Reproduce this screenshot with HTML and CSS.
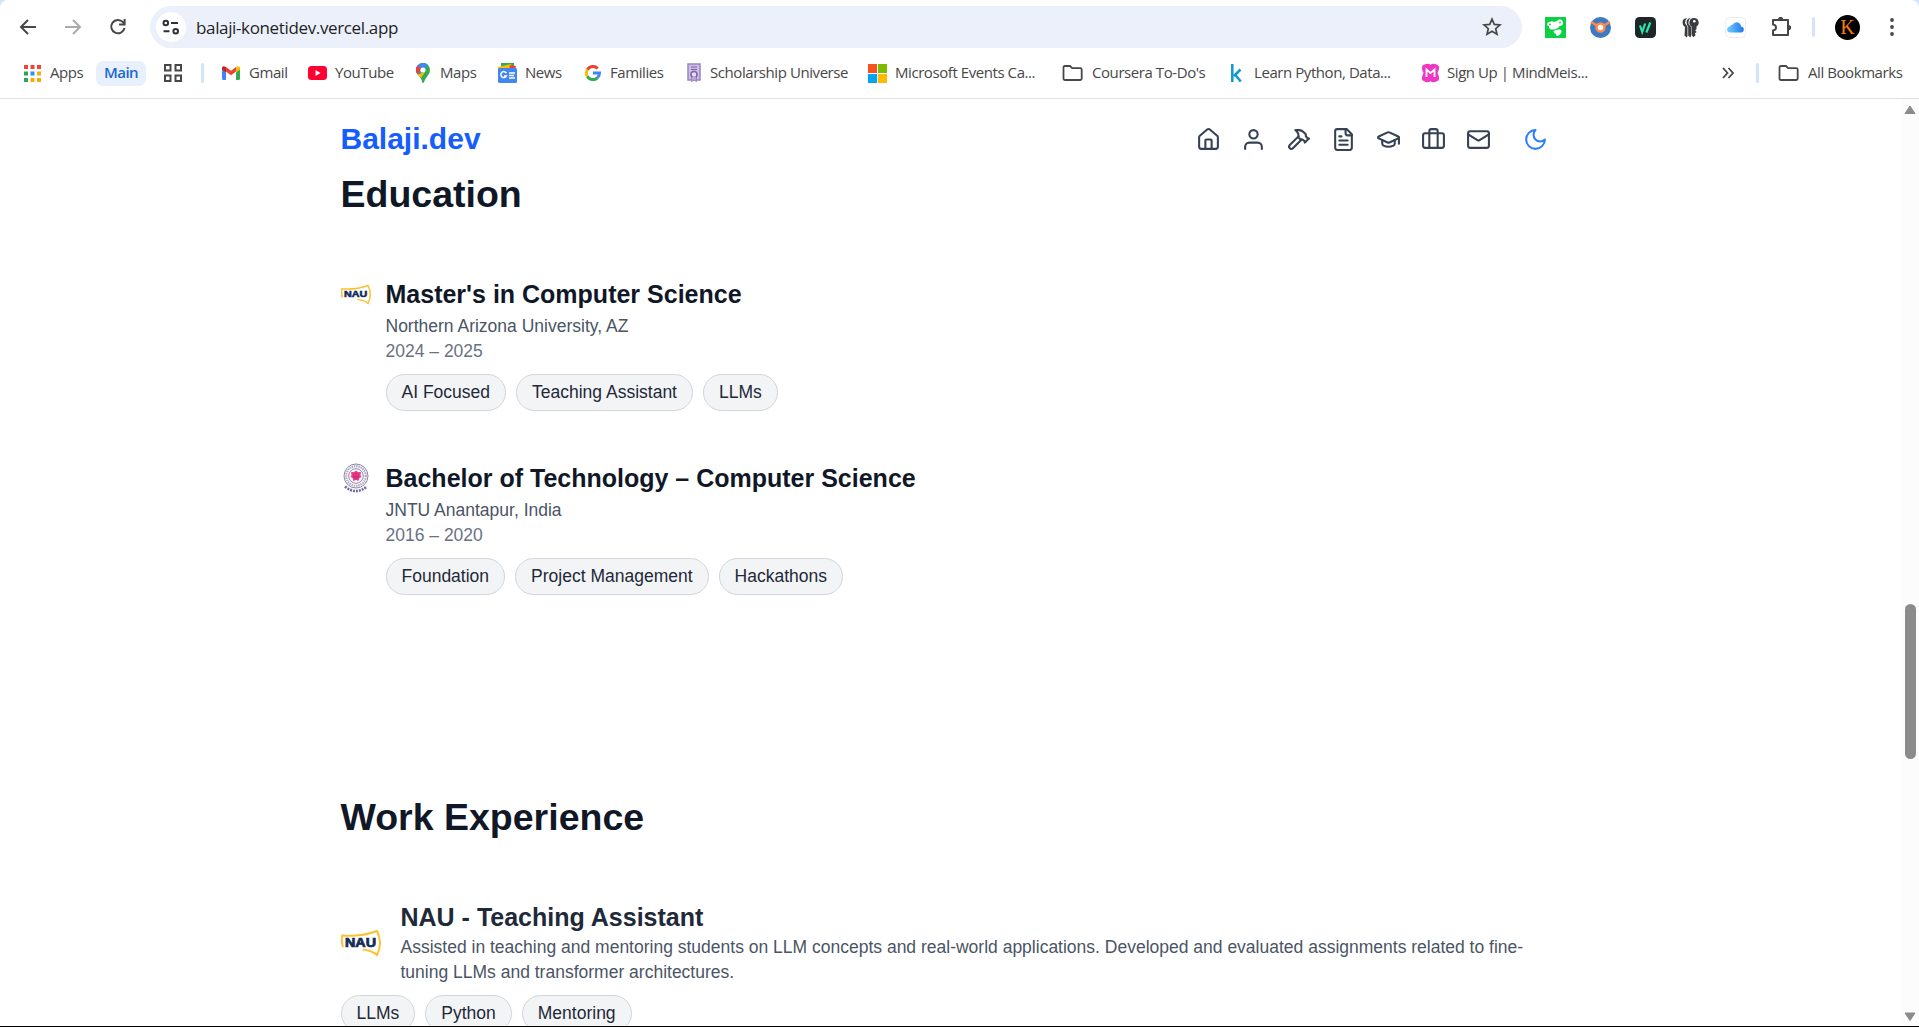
FILE: index.html
```html
<!DOCTYPE html>
<html lang="en">
<head>
<meta charset="utf-8">
<title>Balaji.dev</title>
<link rel="stylesheet" href="styles.css">
</head>
<body>
<div class="window">
  <header class="browser">
    <div class="toolbar">
      <svg class="back" width="18" height="18" viewBox="0 0 18 18"><path d="M17 9H2.500M9 2L2 9l7 7" fill="none" stroke="#474747" stroke-width="2"/></svg>
      <svg class="forward" width="18" height="18" viewBox="0 0 18 18"><path d="M1 9h14.500M9 2l7 7-7 7" fill="none" stroke="#ababab" stroke-width="2"/></svg>
      <svg class="reload" width="18" height="18" viewBox="0 0 18 18"><path d="M15.500 10A6.700 6.700 0 1 1 14 4.200L15.500 6" fill="none" stroke="#474747" stroke-width="2"/><path d="M16.600 1v6.500h-6.500v-2h4.500V1z" fill="#474747"/></svg>
      <div class="omnibox">
        <span class="site"><svg width="18" height="16" viewBox="0 0 18 16"><g fill="none" stroke="#303134" stroke-width="2"><circle cx="3.800" cy="4" r="2.300"/><path d="M9 4h7M1.500 12.300h6"/><circle cx="13.700" cy="12.300" r="2.300"/></g></svg></span>
        <span class="url">balaji-konetidev.vercel.app</span>
        <svg class="star" width="20" height="20" viewBox="0 0 20 20"><path d="M10 2.200l2.300 5.200 5.700.5-4.300 3.800 1.300 5.600-5-3-5 3 1.300-5.600L2 7.900l5.700-.5z" fill="none" stroke="#474747" stroke-width="1.700"/></svg>
      </div>
      <div class="extensions">
        <svg width="21" height="21" viewBox="0 0 21 21"><path d="M0 0h21v21H0z" fill="#0bd044"/><path d="M2 7.500Q2 4.500 5 5q1.500-1.500 4 0 2-1 3-.8Q13 2 15.500 2.500 18.500 3.500 18 7q-1 2-3.500 2-1 2.500-4 3-3 1-5.500 0-1.500-1.500-1-3Q2 9 2 7.500z" fill="#fff"/><path d="M8.500 14q3-2 6.500-1.500 2.500 1 1 3.500-1 2.500-3.500 3-1.500-.2-1.500-2-2.500-.5-2.500-3z" fill="#fff"/><circle cx="5" cy="7.500" r=".9" fill="#0bd044"/><circle cx="15" cy="5.500" r=".9" fill="#0bd044"/></svg>
        <svg width="21" height="21" viewBox="0 0 21 21"><circle cx="10.500" cy="10.500" r="10.500" fill="#3e7ac0"/><path d="M1 5l7 4M20 5l-7 4" stroke="#ff8a4b" stroke-width="2.500"/><circle cx="10.500" cy="10.500" r="4" fill="#fff" stroke="#ff8a4b" stroke-width="2.500"/></svg>
        <svg width="21" height="21" viewBox="0 0 21 21"><rect width="21" height="21" rx="4.500" fill="#1d2729"/><path d="M5 8.500L7.200 15l3-8.500M11.300 15.500l4-10" fill="none" stroke="#2ee6a8" stroke-width="2.200"/></svg>
        <svg width="21" height="21" viewBox="0 0 21 21"><g fill="#3b3c3f"><path d="M7 1Q1 1.500 3 8l2 2-.5 8.500 2.300 2L7.500 19V10L5 6Q5 3 7 1z"/><path d="M10.500 1Q5 2 7 8l1.200 2v8.500l2 2L11 19V10L8.500 7Q8 3 10.500 1z"/><path d="M14 1a4.600 4.600 0 0 0-2.500 8.500V18l2 2.200 2.200-2.200-1-1.500 2-1.500-1.500-1.500L16.500 12V9.500A4.600 4.600 0 0 0 14 1z"/></g><circle cx="14.300" cy="4.300" r="1.300" fill="#fff"/></svg>
        <svg width="21" height="21" viewBox="0 0 21 21"><defs><linearGradient id="cloud"><stop stop-color="#74ccff"/><stop offset="1" stop-color="#1d77ee"/></linearGradient></defs><rect x=".5" y=".5" width="20" height="20" rx="4" fill="#fff" stroke="#ececec"/><path d="M5.500 15.500q-3.500 0-3.500-3 0-2.500 3-3 .5-2 2.500-1.800Q9 5 12 5.200q3.500.3 4 4.300 3 .5 2.800 3.200-.3 2.800-3.300 2.800z" fill="url(#cloud)"/></svg>
        <svg width="21" height="21" viewBox="0 0 21 21"><path d="M2 3h15v15H2v-4.500q3-.3 3-3t-3-3z" fill="none" stroke="#474747" stroke-width="2" stroke-linejoin="round"/><path d="M7 2.500a2.600 2.600 0 0 1 5.200 0zM17.500 8a2.600 2.600 0 0 1 0 5.200z" fill="#474747"/></svg>
      </div>
      <i class="divider"></i>
      <span class="avatar">K</span>
      <svg class="menu" width="4" height="18" viewBox="0 0 4 18"><g fill="#474747"><circle cx="2" cy="2" r="1.900"/><circle cx="2" cy="9" r="1.900"/><circle cx="2" cy="16" r="1.900"/></g></svg>
    </div>
    <nav class="bookmarks">
      <a class="bm apps"><svg width="17" height="17" viewBox="0 0 17 17"><path d="M0 0h4v4H0zM6.500 0h4v4h-4zM13 0h4v4h-4z" fill="#f44336"/><path d="M0 6.500h4v4H0zM0 13h4v4H0z" fill="#34a060"/><path d="M6.500 6.500h4v4h-4z" fill="#2196f3"/><path d="M13 6.500h4v4h-4zM6.500 13h4v4h-4zM13 13h4v4h-4z" fill="#fbab07"/></svg><span>Apps</span></a>
      <a class="group">Main</a>
      <svg class="tabs" width="18" height="18" viewBox="0 0 18 18"><path d="M1 1h5.500v5.500H1zM11.500 1H17v5.500h-5.500zM1 11.500h5.500V17H1zM11.500 11.500H17V17h-5.500z" fill="none" stroke="#474747" stroke-width="2"/></svg>
      <i class="divider"></i>
      <a class="bm gmail"><svg width="18" height="14" viewBox="0 0 18 14"><path d="M0 2v10.500Q0 14 1.500 14H4V5z" fill="#4285f4"/><path d="M18 2v10.500q0 1.500-1.500 1.500H14V5z" fill="#34a853"/><path d="M4 5.500V1l5 3.800L14 1v4.500L9 9.300z" fill="#ea4335"/><path d="M0 2.300Q0-1 4 1v5.500L0 3.600z" fill="#c5221f"/><path d="M18 2.300Q18-1 14 1v5.500l4-2.900z" fill="#fbbc04"/></svg><span>Gmail</span></a>
      <a class="bm youtube"><svg width="19" height="14" viewBox="0 0 19 14"><rect width="19" height="14" rx="3.500" fill="#ff0033"/><path d="M7.500 4l5 3-5 3z" fill="#fff"/></svg><span>YouTube</span></a>
      <a class="bm maps"><svg width="14" height="20" viewBox="0 0 14 20"><path d="M7 0a7 7 0 0 1 7 7q0 3-2.500 6T7.500 20h-1Q6 16 3 13T0 7a7 7 0 0 1 7-7z" fill="#34a853"/><path d="M0 7q0 2.500 1.700 4.500L12 2A7 7 0 0 0 0 7z" fill="#4285f4"/><path d="M1.500 2.500L5 5.500 1.700 11.500Q-2 7 1.500 2.500z" fill="#ea4335"/><path d="M1.700 11.500L9 9l-4 6z" fill="#fbbc04"/><circle cx="7" cy="7" r="2.600" fill="#fff"/></svg><span>Maps</span></a>
      <a class="bm news"><svg width="19" height="20" viewBox="0 0 19 20"><path d="M3 0h13v6H3z" fill="#34a853"/><path d="M0 4l13-3 2 6H0z" fill="#fbbc04"/><path d="M12 2l6 1-1 4h-6z" fill="#ea4335"/><rect y="5" width="19" height="15" rx="1.500" fill="#4285f4"/><path d="M8.500 10.200A3 3 0 1 0 8.500 13H6M11 10h6M11 12.500h5M11 15h6" fill="none" stroke="#fff" stroke-width="1.500"/></svg><span>News</span></a>
      <a class="bm families"><svg width="16" height="16" viewBox="0 0 16 16"><g fill="none" stroke-width="3"><path d="M2.300 4.700A6.500 6.500 0 0 1 12.700 3.500" stroke="#ea4335"/><path d="M2.300 11.300a6.500 6.500 0 0 1 0-6.600" stroke="#fbbc05"/><path d="M12.400 12.800a6.500 6.500 0 0 1-10.100-1.500" stroke="#34a853"/><path d="M8 8h6.500q0 3-2.100 4.800" stroke="#4285f4"/></g></svg><span>Families</span></a>
      <a class="bm scholar"><svg width="14" height="20" viewBox="0 0 14 20"><rect x="1" y="1" width="12" height="16" fill="#cdbfe3" stroke="#9a85c2" stroke-width="1.500"/><path d="M4 4h6M4 6.500h6" stroke="#7a62ab" stroke-width="1.200"/><circle cx="7" cy="11.500" r="3" fill="#e7dff3" stroke="#7a62ab" stroke-width="1.500"/><path d="M4.500 14v4.500L7 17l2.500 1.500V14" fill="#b7a4d8" stroke="#9a85c2"/></svg><span>Scholarship Universe</span></a>
      <a class="bm microsoft"><svg width="19" height="19" viewBox="0 0 19 19"><path d="M0 0h9v9H0z" fill="#f8501f"/><path d="M10 0h9v9h-9z" fill="#7fba00"/><path d="M0 10h9v9H0z" fill="#03a4ef"/><path d="M10 10h9v9h-9z" fill="#ffb902"/></svg><span>Microsoft Events Ca...</span></a>
      <a class="bm coursera"><svg width="21" height="16" viewBox="0 0 21 16"><path d="M1.500 2.500q0-1.500 1.500-1.500h5l2.200 2.200h8q1.500 0 1.500 1.500v8.800q0 1.500-1.500 1.500H3q-1.500 0-1.500-1.500z" fill="none" stroke="#474747" stroke-width="1.800"/></svg><span>Coursera To-Do's</span></a>
      <a class="bm kaggle"><svg width="11" height="18" viewBox="0 0 11 18"><path d="M1.300 0v18M9.500 5.500L3 12M4 10.500l5.800 7" fill="none" stroke="#0d99cf" stroke-width="2.500"/></svg><span>Learn Python, Data...</span></a>
      <a class="bm mind"><svg width="19" height="20" viewBox="0 0 19 20"><path d="M5 1q3-1 4.500 1Q11 0 14 1q5 1 4 5-.5 2-1.500 4 1 2 1.500 4 1 4-4 5-3 1-4.500-1Q8 20 5 19q-5-1-4-5 .5-2 1.500-4-1-2-1.500-4-1-4 4-5z" fill="#f037c4"/><path d="M5.500 14V6.500l4 3.500 4-3.500V14" fill="none" stroke="#fff" stroke-width="1.800"/></svg><span>Sign Up | MindMeis...</span></a>
      <svg class="more" width="12" height="12" viewBox="0 0 12 12"><path d="M1 1l4.500 5L1 11M6.500 1L11 6l-4.500 5" fill="none" stroke="#474747" stroke-width="1.800"/></svg>
      <i class="divider"></i>
      <a class="bm all"><svg width="21" height="16" viewBox="0 0 21 16"><path d="M1.500 2.500q0-1.500 1.500-1.500h5l2.200 2.200h8q1.500 0 1.500 1.500v8.800q0 1.500-1.500 1.500H3q-1.500 0-1.500-1.500z" fill="none" stroke="#474747" stroke-width="1.800"/></svg><span>All Bookmarks</span></a>
    </nav>
  </header>
  <div class="viewport">
    <main class="page">
      <div class="site-nav">
        <a class="logo">Balaji.dev</a>
        <nav class="nav-icons">
          <svg viewBox="0 0 24 24"><path d="M15 21v-8a1 1 0 0 0-1-1h-4a1 1 0 0 0-1 1v8"/><path d="M3 10a2 2 0 0 1 .709-1.528l7-5.999a2 2 0 0 1 2.582 0l7 5.999A2 2 0 0 1 21 10v9a2 2 0 0 1-2 2H5a2 2 0 0 1-2-2z"/></svg>
          <svg viewBox="0 0 24 24"><path d="M20 21v-2a4 4 0 0 0-4-4H8a4 4 0 0 0-4 4v2"/><circle cx="12" cy="7" r="4"/></svg>
          <svg viewBox="0 0 24 24"><path d="m15 12-8.373 8.373a1 1 0 1 1-3-3L12 9"/><path d="m18 15 4-4"/><path d="m21.500 11.500-1.914-1.914A2 2 0 0 1 19 8.172V7l-2.260-2.260a6 6 0 0 0-4.202-1.756L9 2.960l.92.820A6.180 6.180 0 0 1 12 8.400V10l2 2h1.172a2 2 0 0 1 1.414.586L18.500 14.500"/></svg>
          <svg viewBox="0 0 24 24"><path d="M15 2H6a2 2 0 0 0-2 2v16a2 2 0 0 0 2 2h12a2 2 0 0 0 2-2V7Z"/><path d="M14 2v4a2 2 0 0 0 2 2h4M10 9H8M16 13H8M16 17H8"/></svg>
          <svg viewBox="0 0 24 24"><path d="M21.420 10.922a1 1 0 0 0-.019-1.838L12.830 5.180a2 2 0 0 0-1.660 0L2.600 9.080a1 1 0 0 0 0 1.832l8.570 3.908a2 2 0 0 0 1.660 0z"/><path d="M22 10v6"/><path d="M6 12.500V16a6 3 0 0 0 12 0v-3.500"/></svg>
          <svg viewBox="0 0 24 24"><path d="M16 20V4a2 2 0 0 0-2-2h-4a2 2 0 0 0-2 2v16"/><rect width="20" height="14" x="2" y="6" rx="2"/></svg>
          <svg viewBox="0 0 24 24"><rect width="20" height="16" x="2" y="4" rx="2"/><path d="m22 7-8.970 5.700a1.940 1.940 0 0 1-2.060 0L2 7"/></svg>
          <svg class="moon" viewBox="0 0 24 24"><path d="M12 3a6 6 0 0 0 9 9 9 9 0 1 1-9-9Z"/></svg>
        </nav>
      </div>
      <section class="education">
        <h2>Education</h2>
        <article class="school">
          <svg class="crest" width="30" height="21" viewBox="0 0 40 28"><path d="M2 18Q0 11 1.200 6.500Q20 8 36 2Q42 14 36 26Q32 22 22 20.500" fill="none" stroke="#fcc22d" stroke-width="2"/><text x="4" y="17.500" textLength="31" lengthAdjust="spacingAndGlyphs" class="nau-text">NAU</text></svg>
          <div>
            <h3>Master's in Computer Science</h3>
            <p class="place">Northern Arizona University, AZ</p>
            <p class="years">2024 – 2025</p>
            <div class="tags"><span>AI Focused</span><span>Teaching Assistant</span><span>LLMs</span></div>
          </div>
        </article>
        <article class="school">
          <svg class="crest" width="30" height="30" viewBox="0 0 30 30"><g fill="none" stroke="#8d86aa"><circle cx="15" cy="13" r="12"/><circle cx="15" cy="13" r="9.800" stroke-width="2.200" stroke-dasharray="1.500 .8" opacity=".7"/><circle cx="15" cy="13" r="7.300"/><path d="M4 23.500q11 9 22 0" stroke="#7068a0" stroke-width="2.600" stroke-dasharray="2 1"/></g><path d="M15 7.500l2 1.500 3 0-.5 3 1 2-2 1-1 3-2.500-1-2.500 1-1-3-2-1 1-2-.5-3 3 0z" fill="#ee3c90"/><path d="M12 12l3-2 3 2-1 3h-4zM15 10v7M12 14l6-1" fill="none" stroke="#b8286f" stroke-width=".7"/></svg>
          <div>
            <h3>Bachelor of Technology – Computer Science</h3>
            <p class="place">JNTU Anantapur, India</p>
            <p class="years">2016 – 2020</p>
            <div class="tags"><span>Foundation</span><span>Project Management</span><span>Hackathons</span></div>
          </div>
        </article>
      </section>
      <section class="work">
        <h2>Work Experience</h2>
        <article>
          <div class="job">
            <svg width="40" height="28" viewBox="0 0 40 28"><path d="M2 18Q0 11 1.200 6.500Q20 8 36 2Q42 14 36 26Q32 22 22 20.500" fill="none" stroke="#fcc22d" stroke-width="2"/><text x="4" y="17.500" textLength="31" lengthAdjust="spacingAndGlyphs" class="nau-text">NAU</text></svg>
            <div>
              <h3>NAU - Teaching Assistant</h3>
              <p class="place">Assisted in teaching and mentoring students on LLM concepts and real-world applications. Developed and evaluated assignments related to fine-tuning LLMs and transformer architectures.</p>
            </div>
          </div>
          <div class="tags"><span>LLMs</span><span>Python</span><span>Mentoring</span></div>
        </article>
      </section>
    </main>
    <div class="scrollbar">
      <svg width="12" height="10" viewBox="0 0 12 10"><path d="M6 1l5 7.500H1z" fill="#8b8b8b" stroke="#8b8b8b" stroke-linejoin="round"/></svg>
      <i class="thumb"></i>
      <svg width="12" height="10" viewBox="0 0 12 10"><path d="M1 1h10L6 8.500z" fill="#8b8b8b" stroke="#8b8b8b" stroke-linejoin="round"/></svg>
    </div>
  </div>
</div>
</body>
</html>
```
FILE: styles.css
```css
* { box-sizing: border-box; }
body { margin: 0; background: #d3e3fd; }
svg { display: block; flex: none; }
.window {
  height: 1027px;
  display: flex;
  flex-direction: column;
  overflow: hidden;
  background: #fff;
  border-bottom: 1px solid #000;
  border-radius: 8px 8px 0 0;
}

/* Browser bars */
.browser {
  height: 99px;
  flex: none;
  border-bottom: 1px solid #dedfe1;
  font-family: "Open Sans", "Noto Sans", sans-serif;
  color: #474747;
}
.toolbar { height: 54px; display: flex; align-items: center; padding-left: 19px; }
.forward { margin-left: 27px; }
.reload { margin-left: 27px; }
.omnibox {
  width: 1372px;
  height: 42px;
  margin-left: 23px;
  padding: 0 20px 0 6px;
  display: flex;
  align-items: center;
  border-radius: 21px;
  background: #ecf0fa;
}
.site {
  width: 30px;
  height: 30px;
  display: grid;
  place-items: center;
  border-radius: 50%;
  background: #fff;
}
.url { margin-left: 10px; font-size: 17px; letter-spacing: -0.36px; color: #1f1f1f; }
.star { margin-left: auto; }
.extensions { display: flex; gap: 24px; margin-left: 23px; }
.extensions svg:last-child { margin-left: 1px; }
.divider { flex: none; width: 3px; height: 20px; border-radius: 2px; background: #d3e3fd; }
.toolbar .divider { margin-left: 20px; }
.avatar {
  width: 25px;
  height: 25px;
  margin-left: 20px;
  border-radius: 50%;
  background: #000;
  color: #f57c14;
  font: 20px/25px "Liberation Serif", serif;
  text-align: center;
}
.menu { margin-left: 30px; }
.bookmarks { height: 38px; display: flex; align-items: center; font-size: 15px; padding-left: 24px; }
.bm { display: flex; align-items: center; flex: none; white-space: nowrap; gap: 8px; letter-spacing: -0.43px; }
.bm span { padding-bottom: 2px; }
.apps { width: 72px; gap: 9px; }
.group {
  width: 50px;
  height: 25px;
  border-radius: 7px;
  background: #e8f0fe;
  color: #1967d2;
  font-weight: 600;
  letter-spacing: -0.5px;
  line-height: 23px;
  text-align: center;
}
.tabs { margin: 0 19px 0 18px; }
.gmail { width: 86px; margin-left: 18px; gap: 9px; }
.youtube { width: 108px; }
.maps { width: 82px; gap: 10px; }
.news { width: 87px; }
.families { width: 102px; gap: 9px; }
.scholar { width: 181px; gap: 9px; }
.microsoft { width: 194px; }
.coursera { width: 169px; gap: 9px; }
.kaggle { width: 190px; gap: 12px; }
.mind { width: 301px; gap: 7px; }
.more { margin-right: 22px; }
.all { margin-left: 19px; gap: 9px; }

/* Web page */
.viewport { flex: 1; min-height: 0; display: flex; font-family: "Liberation Sans", Arial, sans-serif; }
.page { flex: 1; padding: 17px 353px 0 340.5px; overflow: hidden; font-size: 17.5px; line-height: 25px; }
.site-nav { height: 45px; display: flex; justify-content: space-between; align-items: center; }
.logo { font-size: 30px; line-height: 40px; font-weight: 700; color: #155dfc; }
.nav-icons { display: flex; gap: 20px; padding-top: 2px; color: #364153; }
.nav-icons svg {
  width: 25px;
  height: 25px;
  fill: none;
  stroke: currentColor;
  stroke-width: 2;
  stroke-linecap: round;
  stroke-linejoin: round;
}
.nav-icons .moon { color: #2b7fff; margin-left: 12px; }
h2, h3, p { margin: 0; }
h2 { font-size: 37.5px; line-height: 45px; color: #101828; }
h3 { font-size: 25px; line-height: 35px; color: #101828; }
.education { padding-top: 11px; }
.education h2 { margin-bottom: 60px; }
.school { display: flex; gap: 15px; height: 184px; }
.crest { margin-top: 2px; }
.school:first-of-type .crest { margin-top: 7px; }
.place { color: #4a5565; }
.school .place { margin-top: 2px; }
.years { color: #6a7282; }
.tags { display: flex; gap: 10px; margin-top: 10px; }
.tags span {
  height: 37px;
  padding: 5px 15px;
  border: 1px solid #d1d5dc;
  border-radius: 19px;
  background: #f3f4f6;
  color: #1e2939;
}
.work { padding-top: 150px; }
.work h2 { margin-bottom: 60px; }
.work h3 { color: #1e2939; }
.job { display: flex; align-items: center; gap: 20px; }

.nau-text { font: 700 12px "Liberation Sans", Arial, sans-serif; fill: #14295a; stroke: #14295a; stroke-width: .7px; }

.scrollbar {
  width: 18px;
  padding: 6px 0 4px;
  display: flex;
  flex-direction: column;
  align-items: center;
  justify-content: space-between;
  background: #fcfcfc;
}
.thumb { width: 11px; height: 155px; margin-top: 236px; border-radius: 6px; background: #8b8b8b; }
```
